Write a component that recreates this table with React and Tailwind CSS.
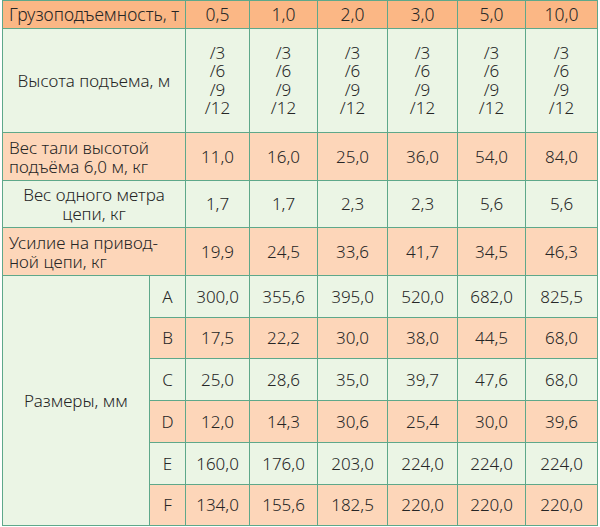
const cols = ["0,5", "1,0", "2,0", "3,0", "5,0", "10,0"]

const rows = [
  { label: "Вес тали высотой подъёма 6,0 м, кг", align: "left", bg: "bg-[#fdd6b9]", h: "h-[48px]", values: ["11,0", "16,0", "25,0", "36,0", "54,0", "84,0"] },
  { label: "Вес одного метра цепи, кг", align: "center", bg: "bg-[#ebf5e5]", h: "h-[47px]", values: ["1,7", "1,7", "2,3", "2,3", "5,6", "5,6"] },
  { label: "Усилие на привод-ной цепи, кг", align: "left", bg: "bg-[#fdd6b9]", h: "h-[48px]", values: ["19,9", "24,5", "33,6", "41,7", "34,5", "46,3"] },
]

const sizes = [
  { letter: "A", bg: "bg-[#ebf5e5]", h: "h-[42px]", values: ["300,0", "355,6", "395,0", "520,0", "682,0", "825,5"] },
  { letter: "B", bg: "bg-[#fdd6b9]", h: "h-[41px]", values: ["17,5", "22,2", "30,0", "38,0", "44,5", "68,0"] },
  { letter: "C", bg: "bg-[#ebf5e5]", h: "h-[42px]", values: ["25,0", "28,6", "35,0", "39,7", "47,6", "68,0"] },
  { letter: "D", bg: "bg-[#fdd6b9]", h: "h-[42px]", values: ["12,0", "14,3", "30,6", "25,4", "30,0", "39,6"] },
  { letter: "E", bg: "bg-[#ebf5e5]", h: "h-[42px]", values: ["160,0", "176,0", "203,0", "224,0", "224,0", "224,0"] },
  { letter: "F", bg: "bg-[#fdd6b9]", h: "h-[41px]", values: ["134,0", "155,6", "182,5", "220,0", "220,0", "220,0"] },
]

const cell = "border border-[#5ea88a] text-center align-middle p-0"

export default function App() {
  return (
    <div className="w-[600px] h-[527px] bg-white pl-[2px] text-[#262626] text-[17px] font-light" style={{ fontFamily: "'Noto Sans', sans-serif" }}>
      <table className="table-fixed border-collapse w-[595px]">
        <colgroup>
          <col className="w-[147px]" />
          <col className="w-[36px]" />
          <col className="w-[64px]" />
          <col className="w-[68px]" />
          <col className="w-[70px]" />
          <col className="w-[70px]" />
          <col className="w-[68px]" />
          <col className="w-[72px]" />
        </colgroup>
        <tbody>
          {/* header */}
          <tr className="h-[28px] bg-[#fbb785]">
            <td colSpan={2} className={cell + " leading-none whitespace-nowrap text-[17.5px]"}>Грузоподъемность, т</td>
            {cols.map((c) => (
              <td key={c} className={cell + " leading-none text-[17.5px]"}>{c}</td>
            ))}
          </tr>

          {/* lift height */}
          <tr className="h-[104px] bg-[#ebf5e5]">
            <td colSpan={2} className={cell}>Высота подъема, м</td>
            {cols.map((c) => (
              <td key={c} className={cell + " leading-[18.5px]"}>
                /3<br />/6<br />/9<br />/12
              </td>
            ))}
          </tr>

          {rows.map((r) => (
            <tr key={r.label} className={r.h + " " + r.bg}>
              <td colSpan={2} className={cell + " leading-[19px] " + (r.align === "left" ? "text-left pl-[6px]" : "px-[6px]")}>
                {r.label}
              </td>
              {r.values.map((v, i) => (
                <td key={i} className={cell}>{v}</td>
              ))}
            </tr>
          ))}

          {sizes.map((s, idx) => (
            <tr key={s.letter} className={s.h + " " + s.bg}>
              {idx === 0 && (
                <td rowSpan={6} className={cell + " bg-[#ebf5e5]"}>Размеры, мм</td>
              )}
              <td className={cell}>{s.letter}</td>
              {s.values.map((v, i) => (
                <td key={i} className={cell + " whitespace-nowrap"}>{v}</td>
              ))}
            </tr>
          ))}
        </tbody>
      </table>
    </div>
  )
}
